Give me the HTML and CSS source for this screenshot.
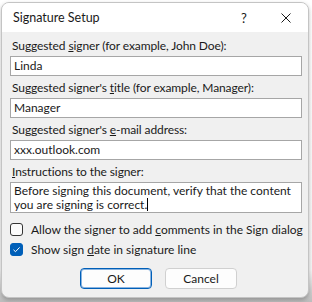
FILE: index.html
```html
<!DOCTYPE html>
<html>
<head>
<meta charset="utf-8">
<link rel="stylesheet" href="styles.css">
</head>
<body>
<div class="window">
  <div class="titlebar">
    <span class="title">Signature Setup</span>
    <span class="help">?</span>
    <span class="close"><svg width="10" height="10" viewBox="0 0 10 10"><path d="M0.5 0.5 L9.5 9.5 M9.5 0.5 L0.5 9.5" stroke="#1a1a1a" stroke-width="1" fill="none"/></svg></span>
  </div>
  <div class="content">
    <div class="field">
      <div class="label">Suggested <u>s</u>igner (for example, John Doe):</div>
      <div class="input">Linda</div>
    </div>
    <div class="field">
      <div class="label">Suggested signer's <u>t</u>itle (for example, Manager):</div>
      <div class="input">Manager</div>
    </div>
    <div class="field">
      <div class="label">Suggested signer's <u>e</u>-mail address:</div>
      <div class="input">xxx.outlook.com</div>
    </div>
    <div class="field">
      <div class="label"><u>I</u>nstructions to the signer:</div>
      <div class="input textarea">Before signing this document, verify that the content<br>you are signing is correct.<span class="caret"></span></div>
    </div>
    <div class="checks">
      <div class="check"><span class="box"></span><span>Allow the signer to add <u>c</u>omments in the Sign dialog</span></div>
      <div class="check"><span class="box checked"><svg width="13" height="13" viewBox="0 0 13 13"><path d="M3.5 6.8 L5.5 8.7 L9.6 4.4" stroke="#fff" stroke-width="1" fill="none"/></svg></span><span>Show sign <u>d</u>ate in signature line</span></div>
    </div>
    <div class="buttons">
      <div class="btn primary">OK</div>
      <div class="btn">Cancel</div>
    </div>
  </div>
</div>
</body>
</html>
```
FILE: styles.css
```css
html, body {
  margin: 0;
  padding: 0;
}
body {
  width: 312px;
  height: 302px;
  background: linear-gradient(#ffffff 0, #f6f6f6 270px, #bcbcbc 302px);
  font-family: Lato, "Noto Sans", sans-serif;
  font-size: 12px;
  color: #1a1a1a;
  overflow: hidden;
}
.window {
  margin: 2px 0 0 1px;
  width: 306px;
  height: 294px;
  border: 1px solid #c4c4c4;
  border-radius: 8px;
  overflow: hidden;
  background: #f0f0f0;
  display: flex;
  flex-direction: column;
  box-shadow: 0 2px 4px rgba(0,0,0,0.25);
}
.titlebar {
  height: 29px;
  background: #ffffff;
  display: flex;
  align-items: center;
  padding-left: 11px;
  flex-shrink: 0;
}
.title {
  flex: 1;
  font-size: 12.5px;
}
.help {
  width: 20px;
  margin-right: 27px;
  text-align: center;
  font-size: 13px;
}
.close {
  width: 10px;
  height: 10px;
  margin-right: 17px;
  display: flex;
}
.content {
  padding: 6px 6px 0 8px;
  display: flex;
  flex-direction: column;
}
.field {
  display: flex;
  flex-direction: column;
  margin-bottom: 4px;
}
.label {
  line-height: 15px;
  padding-left: 2px;
  margin-bottom: 3px;
  white-space: nowrap;
  letter-spacing: -0.1px;
}
.input {
  height: 18px;
  border: 1px solid #a6a6a6;
  background: #ffffff;
  line-height: 18px;
  padding-left: 3px;
  white-space: nowrap;
}
.textarea {
  line-height: 13.5px;
  padding-top: 1px;
  box-sizing: content-box;
  height: 28px;
}
.caret {
  display: inline-block;
  width: 1px;
  height: 13px;
  background: #000;
  vertical-align: -2px;
}
.checks {
  display: flex;
  flex-direction: column;
  gap: 7px;
  margin-top: 6px;
}
.check {
  display: flex;
  align-items: center;
  height: 13px;
  gap: 8px;
  white-space: nowrap;
}
.box {
  width: 11px;
  height: 11px;
  border: 1px solid #333;
  border-radius: 3px;
  background: #fbfbfb;
  flex-shrink: 0;
  position: relative;
}
.box.checked {
  background: #005fb8;
  border-color: #005fb8;
}
.box svg {
  position: absolute;
  left: -1px;
  top: -1px;
}
.buttons {
  display: flex;
  gap: 13px;
  margin-top: 12px;
  padding-left: 70px;
}
.btn {
  width: 70px;
  height: 19px;
  border: 1px solid #d0d0d0;
  border-radius: 4px;
  background: #fdfdfd;
  text-align: center;
  line-height: 19px;
}
.btn.primary {
  border-color: #005fb8;
  box-shadow: inset 0 0 0 1px #8ab4e0;
}
```
